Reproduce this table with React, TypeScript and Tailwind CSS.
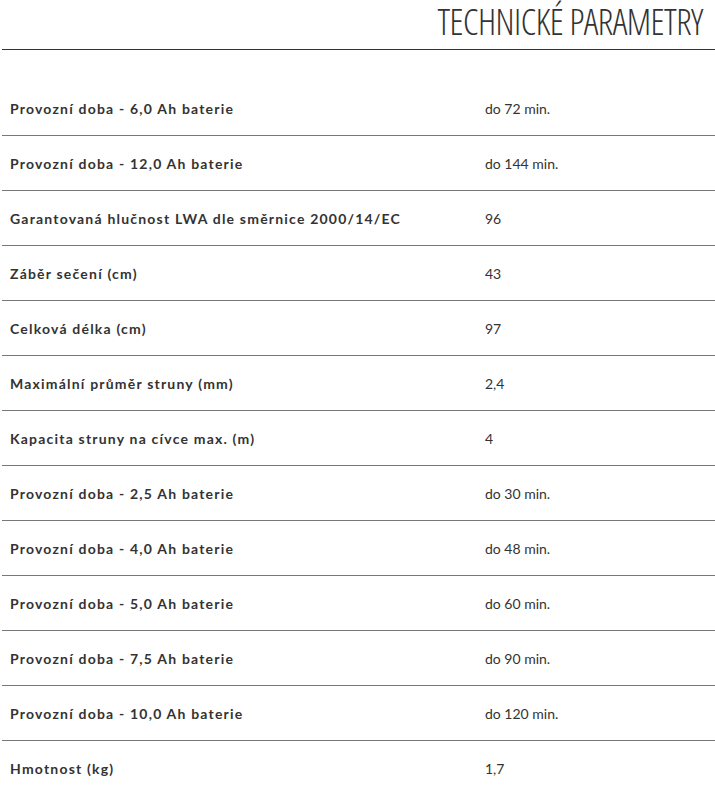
const rows: [string, string][] = [
  ['Provozní doba - 6,0 Ah baterie', 'do 72 min.'],
  ['Provozní doba - 12,0 Ah baterie', 'do 144 min.'],
  ['Garantovaná hlučnost LWA dle směrnice 2000/14/EC', '96'],
  ['Záběr sečení (cm)', '43'],
  ['Celková délka (cm)', '97'],
  ['Maximální průměr struny (mm)', '2,4'],
  ['Kapacita struny na cívce max. (m)', '4'],
  ['Provozní doba - 2,5 Ah baterie', 'do 30 min.'],
  ['Provozní doba - 4,0 Ah baterie', 'do 48 min.'],
  ['Provozní doba - 5,0 Ah baterie', 'do 60 min.'],
  ['Provozní doba - 7,5 Ah baterie', 'do 90 min.'],
  ['Provozní doba - 10,0 Ah baterie', 'do 120 min.'],
  ['Hmotnost (kg)', '1,7'],
];

export default function App() {
  return (
    <div className="bg-white w-[715px] h-[794px] overflow-hidden pl-[2px] font-['Lato',sans-serif] text-[#333]">
      <div className="border-b border-[#333] flex justify-end pr-[12px] pt-[2px] pb-[7px]">
        <h2 className="font-['Open_Sans',sans-serif] [font-stretch:condensed] font-light text-[36px] leading-[40px] tracking-[-0.5px] text-[#333] uppercase">
          Technické parametry
        </h2>
      </div>
      <div className="mt-[31px]">
        {rows.map(([label, value], i) => (
          <div
            key={i}
            className={`grid grid-cols-[483px_1fr] h-[55px] items-center ${i < rows.length - 1 ? 'border-b border-[#777]' : ''}`}
          >
            <div className="pl-[8px] text-[14px] font-bold tracking-[1.2px] text-[#333]">{label}</div>
            <div className="text-[14px] text-[#333]">{value}</div>
          </div>
        ))}
      </div>
    </div>
  );
}
